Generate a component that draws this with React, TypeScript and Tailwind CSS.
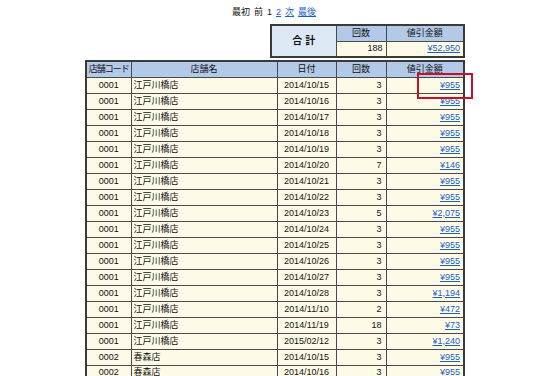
import React from "react";

const rows: [string, string, string, string, string][] = [
  ["0001", "江戸川橋店", "2014/10/15", "3", "¥955"],
  ["0001", "江戸川橋店", "2014/10/16", "3", "¥955"],
  ["0001", "江戸川橋店", "2014/10/17", "3", "¥955"],
  ["0001", "江戸川橋店", "2014/10/18", "3", "¥955"],
  ["0001", "江戸川橋店", "2014/10/19", "3", "¥955"],
  ["0001", "江戸川橋店", "2014/10/20", "7", "¥146"],
  ["0001", "江戸川橋店", "2014/10/21", "3", "¥955"],
  ["0001", "江戸川橋店", "2014/10/22", "3", "¥955"],
  ["0001", "江戸川橋店", "2014/10/23", "5", "¥2,075"],
  ["0001", "江戸川橋店", "2014/10/24", "3", "¥955"],
  ["0001", "江戸川橋店", "2014/10/25", "3", "¥955"],
  ["0001", "江戸川橋店", "2014/10/26", "3", "¥955"],
  ["0001", "江戸川橋店", "2014/10/27", "3", "¥955"],
  ["0001", "江戸川橋店", "2014/10/28", "3", "¥1,194"],
  ["0001", "江戸川橋店", "2014/11/10", "2", "¥472"],
  ["0001", "江戸川橋店", "2014/11/19", "18", "¥73"],
  ["0001", "江戸川橋店", "2015/02/12", "3", "¥1,240"],
  ["0002", "春森店", "2014/10/15", "3", "¥955"],
  ["0002", "春森店", "2014/10/16", "3", "¥955"],
];

const font = { fontFamily: '"Liberation Sans", "Noto Sans CJK JP", sans-serif' };
const cell = "border border-[#4a4a4a] p-0 whitespace-nowrap";

export default function App() {
  return (
    <div
      className="relative w-[550px] h-[376px] overflow-hidden bg-white text-[9px] text-[#111] leading-none"
      style={font}
    >
      <div className="flex h-[24px] pl-[232px] pt-[8px] gap-[4px]">
        <span>最初</span>
        <span>前</span>
        <span>1</span>
        <a className="text-[#1a5fc8] underline">2</a>
        <a className="text-[#1a5fc8] underline">次</a>
        <a className="text-[#1a5fc8] underline">最後</a>
      </div>

      <div className="pl-[270px]">
        <table className="border-collapse border-2 border-[#3a3a3a] w-[193px] table-fixed">
          <colgroup>
            <col className="w-[65px]" />
            <col className="w-[50px]" />
            <col className="w-[78px]" />
          </colgroup>
          <tbody>
            <tr className="h-[16px]">
              <td rowSpan={2} className={`${cell} bg-[#dde8f5] text-center font-bold text-[10px]`}>
                合 計
              </td>
              <td className={`${cell} bg-[#b3c9e8] text-center`}>回数</td>
              <td className={`${cell} bg-[#b3c9e8] text-center`}>値引金額</td>
            </tr>
            <tr className="h-[16px]">
              <td className={`${cell} bg-[#fdfbe8] text-right pr-[3px]`}>188</td>
              <td className={`${cell} bg-[#fdfbe8] text-right pr-[3px]`}>
                <a className="text-[#1a5fc8] underline">¥52,950</a>
              </td>
            </tr>
          </tbody>
        </table>
      </div>

      <div className="pl-[85px] pt-[2px]">
        <table className="border-collapse border-2 border-[#3a3a3a] w-[378px] table-fixed">
          <colgroup>
            <col className="w-[45px]" />
            <col className="w-[146px]" />
            <col className="w-[59px]" />
            <col className="w-[50px]" />
            <col className="w-[78px]" />
          </colgroup>
          <thead>
            <tr className="h-[16px] bg-[#b3c9e8]">
              <th className={`${cell} font-normal text-center tracking-[-1px]`}>店舗コード</th>
              <th className={`${cell} font-normal text-center`}>店舗名</th>
              <th className={`${cell} font-normal text-center`}>日付</th>
              <th className={`${cell} font-normal text-center`}>回数</th>
              <th className={`${cell} font-normal text-center`}>値引金額</th>
            </tr>
          </thead>
          <tbody>
            {rows.map((r, i) => (
              <tr key={i} className="h-[16px] bg-[#fdfbe8]">
                <td className={`${cell} text-center`}>{r[0]}</td>
                <td className={`${cell} pl-[2px]`}>{r[1]}</td>
                <td className={`${cell} text-center`}>{r[2]}</td>
                <td className={`${cell} text-right pr-[4px]`}>{r[3]}</td>
                <td className={`${cell} text-right pr-[3px]`}>
                  <a className="text-[#1a5fc8] underline">{r[4]}</a>
                </td>
              </tr>
            ))}
          </tbody>
        </table>
      </div>

      <div className="absolute left-[417px] top-[73px] w-[56px] h-[26px] border-2 border-[#c8102e]" />
    </div>
  );
}
